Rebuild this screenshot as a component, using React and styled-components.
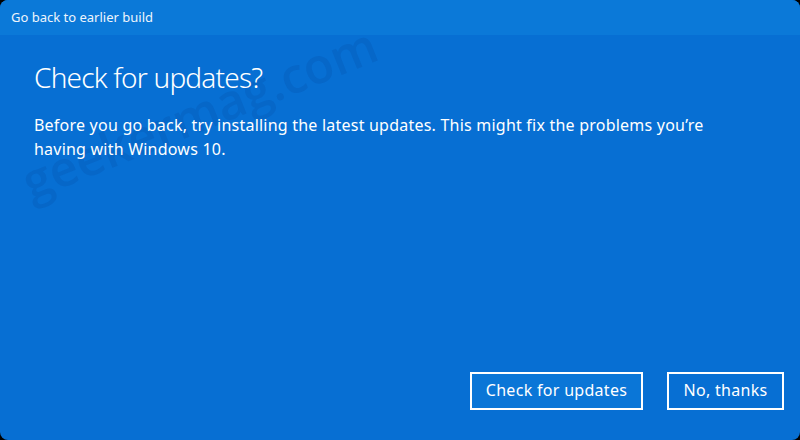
import React from "react";
import styled, { createGlobalStyle } from "styled-components";

const Global = createGlobalStyle`
  html, body { margin: 0; padding: 0; background: #000; }
  body { width: 800px; height: 440px; overflow: hidden; }
  * { box-sizing: border-box; }
`;

const Dialog = styled.div`
  position: relative;
  width: 800px;
  height: 440px;
  border-radius: 8px;
  overflow: hidden;
  background: #076fd3;
  display: flex;
  flex-direction: column;
  font-family: "Noto Sans", "Open Sans", sans-serif;
  color: #fff;
`;

const TitleBar = styled.div`
  height: 35px;
  flex: none;
  background: #0b79d8;
  display: flex;
  align-items: center;
  padding: 0 0 2px 11px;
  font-size: 13px;
  color: #eef5fc;
`;

const Body = styled.div`
  position: relative;
  z-index: 1;
  flex: 1;
  display: flex;
  flex-direction: column;
  padding: 22px 34px 30px 34px;
`;

const Heading = styled.h1`
  margin: 0;
  font-size: 28px;
  font-weight: 300;
  line-height: 40px;
  letter-spacing: -0.8px;
`;

const Text = styled.p`
  margin: 16px 0 0;
  font-size: 16px;
  line-height: 24px;
  max-width: 690px;
  letter-spacing: 0.22px;
`;

const Actions = styled.div`
  margin-top: auto;
  display: flex;
  justify-content: flex-end;
  gap: 24px;
  margin-right: -18px;
`;

const Button = styled.button`
  height: 38px;
  width: ${(p) => p.$w}px;
  border: 2px solid #fff;
  background: ${(p) => (p.$primary ? "#0a76d7" : "transparent")};
  color: #fff;
  font-family: "Noto Sans", "Open Sans", sans-serif;
  font-size: 16px;
  padding: 0 0 2px;
  letter-spacing: 0.3px;
`;

const Watermark = styled.div`
  position: absolute;
  left: 24px;
  top: 150px;
  font-family: "Open Sans", sans-serif;
  font-size: 49px;
  font-weight: 600;
  line-height: 66px;
  color: rgba(0, 25, 90, 0.09);
  transform: rotate(-22deg);
  transform-origin: left center;
  pointer-events: none;
  white-space: nowrap;
`;

export default function App() {
  return (
    <>
      <Global />
      <Dialog>
        <TitleBar>Go back to earlier build</TitleBar>
        <Watermark>geekermag.com</Watermark>
        <Body>
          <Heading>Check for updates?</Heading>
          <Text>
            Before you go back, try installing the latest updates. This might fix the problems you’re having with Windows 10.
          </Text>
          <Actions>
            <Button $primary $w={173}>Check for updates</Button>
            <Button $w={117}>No, thanks</Button>
          </Actions>
        </Body>
      </Dialog>
    </>
  );
}
